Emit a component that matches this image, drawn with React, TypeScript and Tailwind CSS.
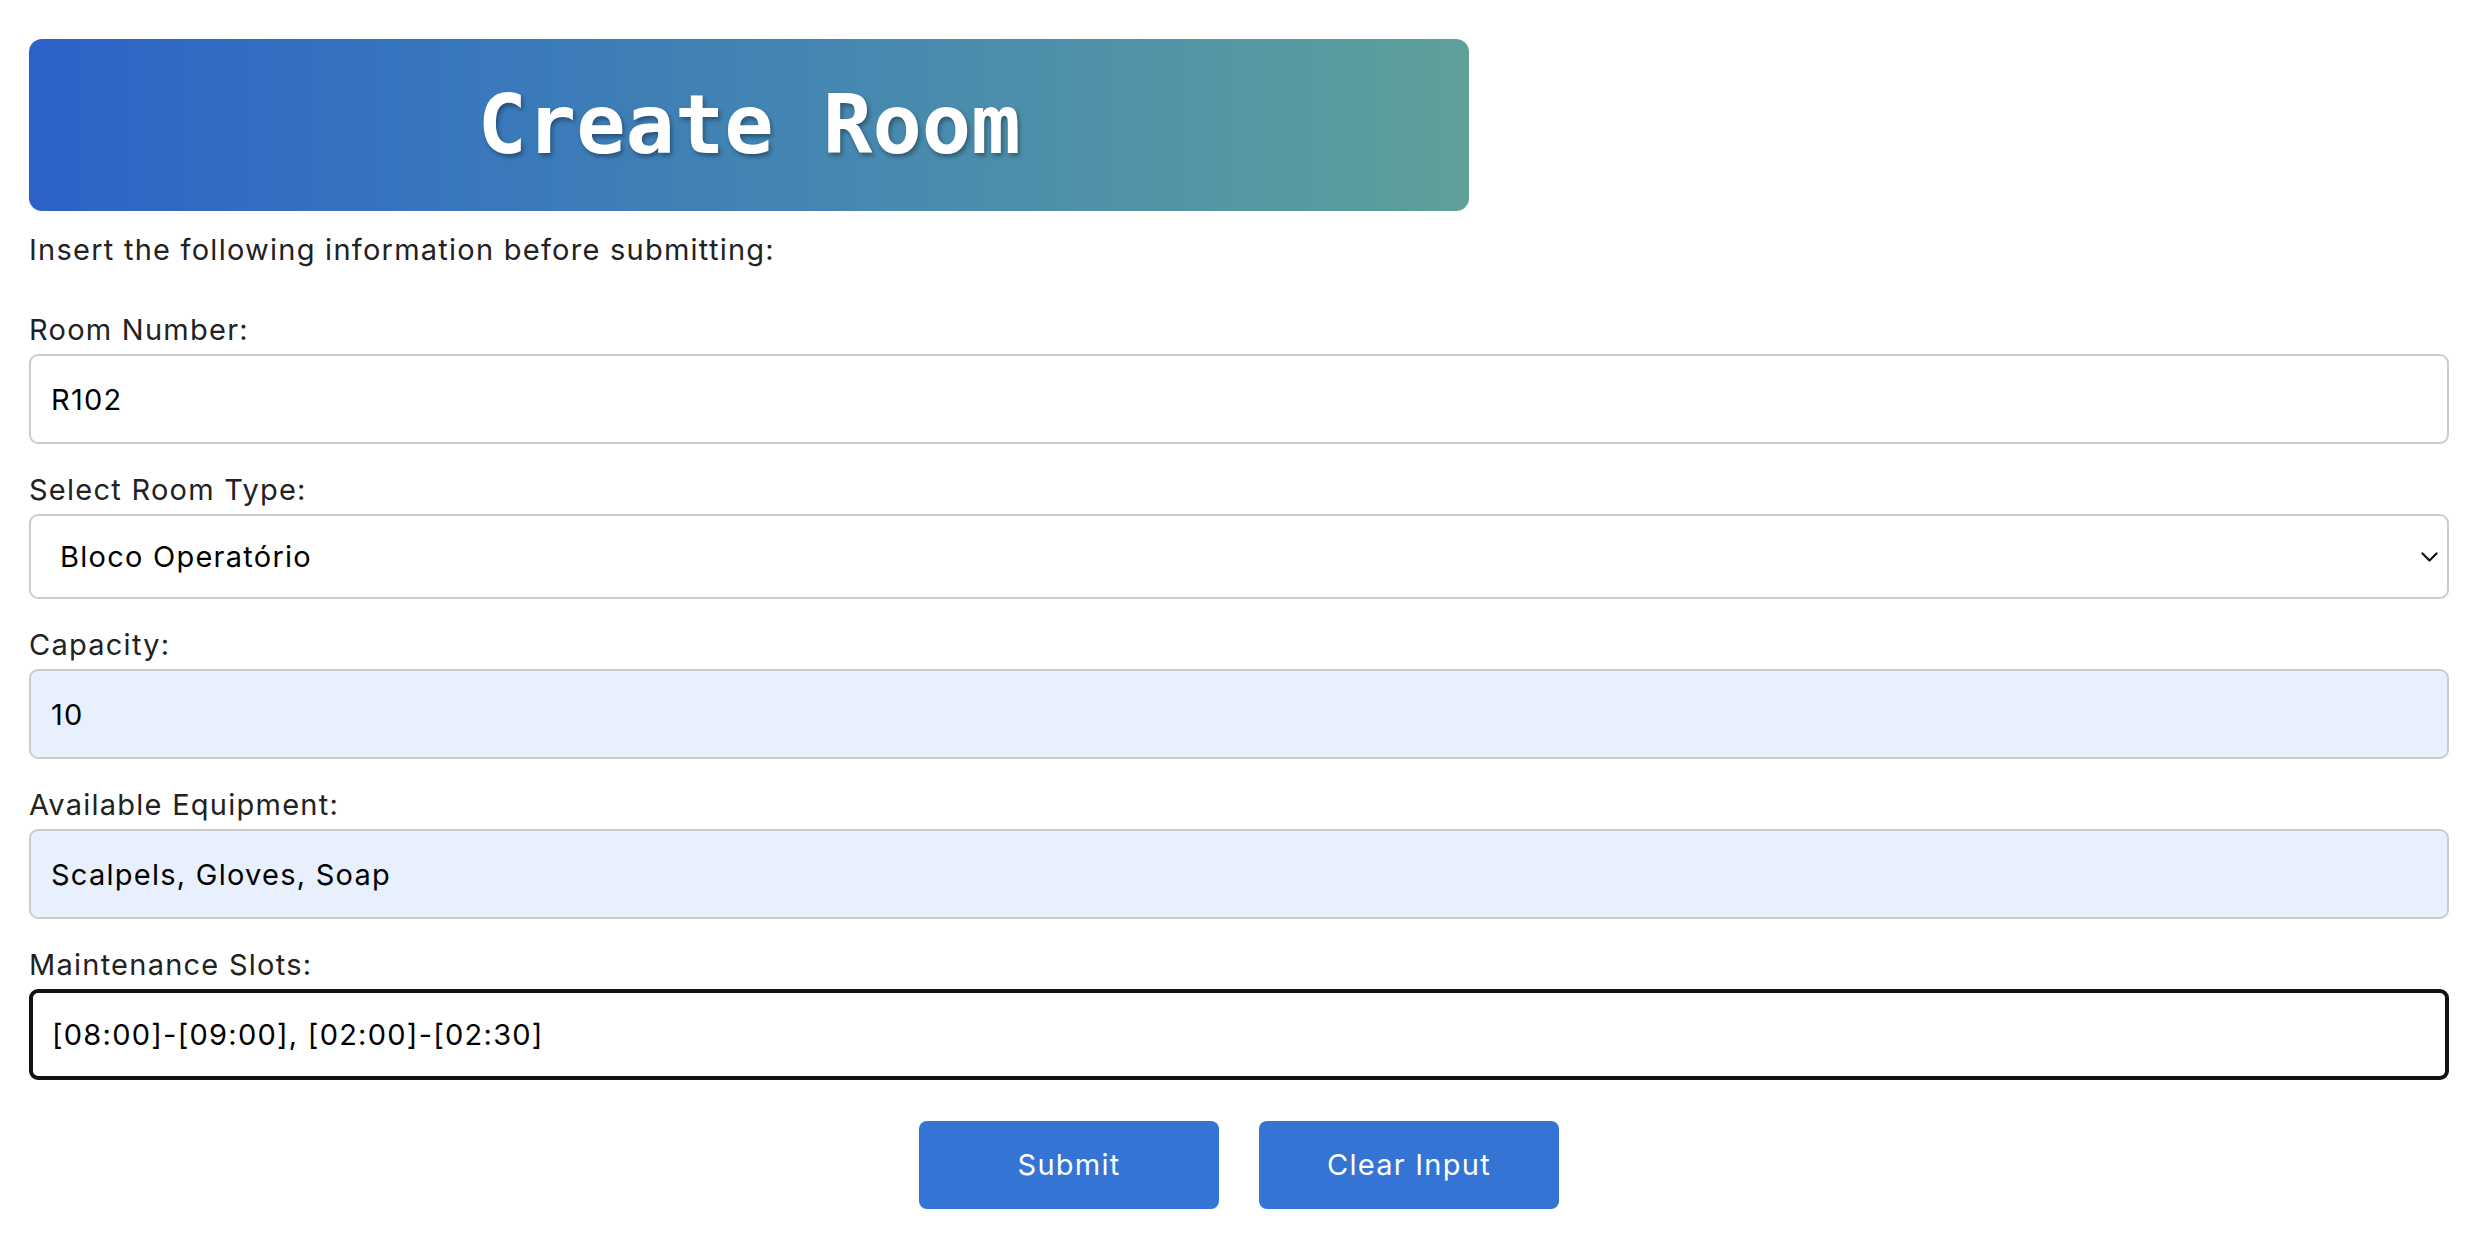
import { useState } from 'react';

const roomTypes = ['Bloco Operatório', 'Consultório', 'Enfermaria', 'Sala de Exames'];

function Field({ label, children }: { label: string; children: React.ReactNode }) {
  return (
    <div className="mt-[28px] first:mt-0">
      <label className="block text-[29px] leading-[35px] text-[#222222]">{label}</label>
      <div className="mt-[7px]">{children}</div>
    </div>
  );
}

export default function App() {
  const [roomNumber, setRoomNumber] = useState('R102');
  const [roomType, setRoomType] = useState('Bloco Operatório');
  const [capacity, setCapacity] = useState('10');
  const [equipment, setEquipment] = useState('Scalpels, Gloves, Soap');
  const [slots, setSlots] = useState('[08:00]-[09:00], [02:00]-[02:30]');

  function clearInput() {
    setRoomNumber('');
    setCapacity('');
    setEquipment('');
    setSlots('');
  }

  return (
    <div className="min-h-screen bg-white px-[29px] pt-[39px] font-['Inter',sans-serif] tracking-[1.25px]">
      <div className="flex h-[172px] w-[1440px] items-center justify-center rounded-[13px] bg-gradient-to-r from-[#2c62c8] to-[#5fa09a]">
        <h1 className="font-['DejaVu_Sans_Mono',monospace] text-[82px] font-bold leading-none tracking-normal text-white [text-shadow:2px_3px_4px_rgba(0,0,0,0.35)]">
          Create Room
        </h1>
      </div>
      <p className="mt-[21px] text-[29px] leading-[35px] text-[#222222]">
        Insert the following information before submitting:
      </p>

      <form className="mt-[45px]" onSubmit={(e) => e.preventDefault()}>
        <Field label="Room Number:">
          <input
            value={roomNumber}
            onChange={(e) => setRoomNumber(e.target.value)}
            className="block h-[90px] w-full rounded-[9px] border-2 border-[#cccccc] bg-white px-[20px] text-[29px] tracking-[1.25px] text-black outline-none"
          />
        </Field>
        <Field label="Select Room Type:">
          <div className="relative">
            <select
              value={roomType}
              onChange={(e) => setRoomType(e.target.value)}
              className="block h-[85px] w-full appearance-none rounded-[9px] border-2 border-[#cccccc] bg-white pl-[29px] text-[29px] tracking-[1.25px] text-black outline-none"
            >
              {roomTypes.map((type) => (
                <option key={type}>{type}</option>
              ))}
            </select>
            <svg
              className="pointer-events-none absolute right-[11px] top-[38px] h-[10px] w-[17px]"
              viewBox="0 0 17 10"
              fill="none"
              stroke="#111111"
              strokeWidth="2.2"
              strokeLinecap="round"
              strokeLinejoin="round"
            >
              <path d="M1.5 1.5 8.5 8.5 15.5 1.5" />
            </svg>
          </div>
        </Field>
        <Field label="Capacity:">
          <input
            value={capacity}
            onChange={(e) => setCapacity(e.target.value)}
            className="block h-[90px] w-full rounded-[9px] border-2 border-[#cccccc] bg-[#e8f0fe] px-[20px] text-[29px] tracking-[1.25px] text-black outline-none"
          />
        </Field>
        <Field label="Available Equipment:">
          <input
            value={equipment}
            onChange={(e) => setEquipment(e.target.value)}
            className="block h-[90px] w-full rounded-[9px] border-2 border-[#cccccc] bg-[#e8f0fe] px-[20px] text-[29px] tracking-[1.25px] text-black outline-none"
          />
        </Field>
        <Field label="Maintenance Slots:">
          <input
            value={slots}
            onChange={(e) => setSlots(e.target.value)}
            className="block h-[91px] w-full rounded-[9px] border-[4px] border-[#111111] bg-white px-[19px] text-[29px] tracking-[1.25px] text-black outline-none"
          />
        </Field>

        <div className="mt-[41px] flex justify-center gap-[40px]">
          <button
            type="submit"
            className="h-[88px] w-[300px] rounded-[8px] bg-[#3474d4] text-[29px] tracking-[1.25px] text-white"
          >
            Submit
          </button>
          <button
            type="button"
            onClick={clearInput}
            className="h-[88px] w-[300px] rounded-[8px] bg-[#3474d4] text-[29px] tracking-[1.25px] text-white"
          >
            Clear Input
          </button>
        </div>
      </form>
    </div>
  );
}
